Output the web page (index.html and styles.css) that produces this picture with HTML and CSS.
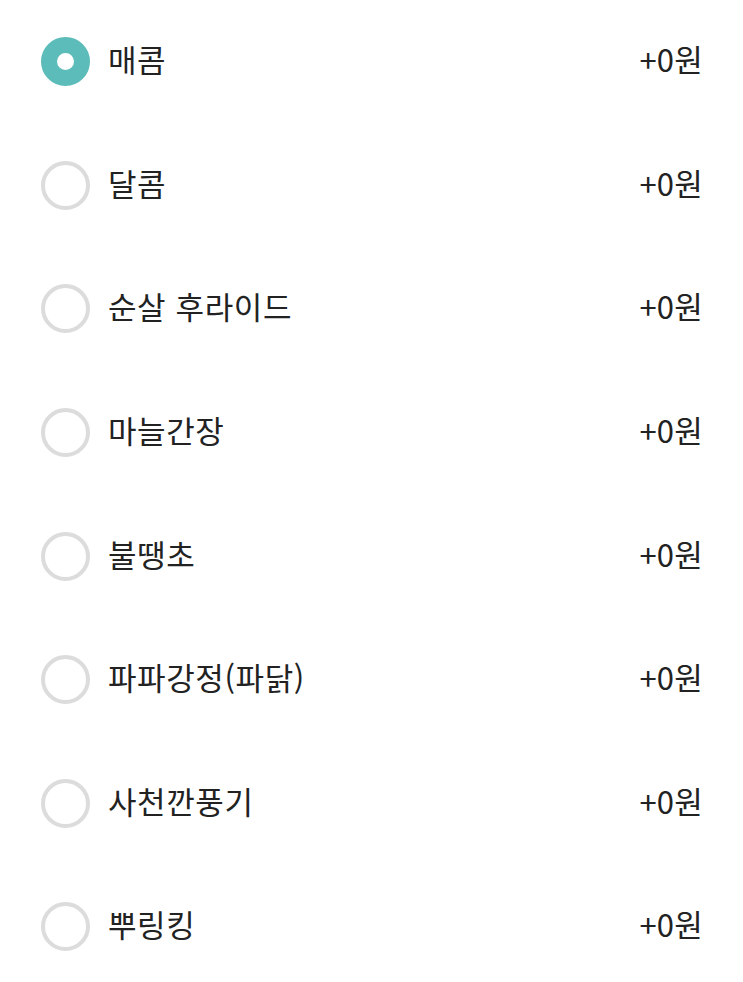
FILE: index.html
```html
<!DOCTYPE html>
<html lang="ko">
<head>
  <meta charset="UTF-8" />
  <meta name="viewport" content="width=device-width, initial-scale=1.0"/>
  <title>옵션 선택</title>
  <link rel="stylesheet" href="styles.css">
</head>
<body>

<!-- 맛 선택 옵션 -->
<ul class="options">
  <li class="option selected">
    <span class="radio"></span>
    <span class="name">매콤</span>
    <span class="price">+0원</span>
  </li>
  <li class="option">
    <span class="radio"></span>
    <span class="name">달콤</span>
    <span class="price">+0원</span>
  </li>
  <li class="option">
    <span class="radio"></span>
    <span class="name">순살 후라이드</span>
    <span class="price">+0원</span>
  </li>
  <li class="option">
    <span class="radio"></span>
    <span class="name">마늘간장</span>
    <span class="price">+0원</span>
  </li>
  <li class="option">
    <span class="radio"></span>
    <span class="name">불땡초</span>
    <span class="price">+0원</span>
  </li>
  <li class="option">
    <span class="radio"></span>
    <span class="name">파파강정(파닭)</span>
    <span class="price">+0원</span>
  </li>
  <li class="option">
    <span class="radio"></span>
    <span class="name">사천깐풍기</span>
    <span class="price">+0원</span>
  </li>
  <li class="option">
    <span class="radio"></span>
    <span class="name">뿌링킹</span>
    <span class="price">+0원</span>
  </li>
</ul>

</body>
</html>
```

FILE: styles.css
```css
* {
  margin: 0;
  padding: 0;
  box-sizing: border-box;
}
body, html {
  background: #fff;
  font-family: 'Noto Sans CJK KR', 'Noto Sans', sans-serif;
  color: #222;
}

.options {
  list-style: none;
  padding: 0 40px 0 41px;
}

.option {
  display: flex;
  align-items: center;
  height: 123.6px;
}

/* 라디오 버튼 */
.radio {
  width: 49px;
  height: 49px;
  border-radius: 50%;
  border: 4px solid #dcdcdc;
  flex-shrink: 0;
  margin-right: 18px;
}

.option.selected .radio {
  border: 16px solid #5cbcb9;
  background: #fff;
}

.name,
.price {
  font-size: 31px;
  letter-spacing: 0.6px;
  line-height: 1.3;
  margin-bottom: 5px;
}

.name {
  flex: 1;
}

.price {
  letter-spacing: 0.2px;
}
```
